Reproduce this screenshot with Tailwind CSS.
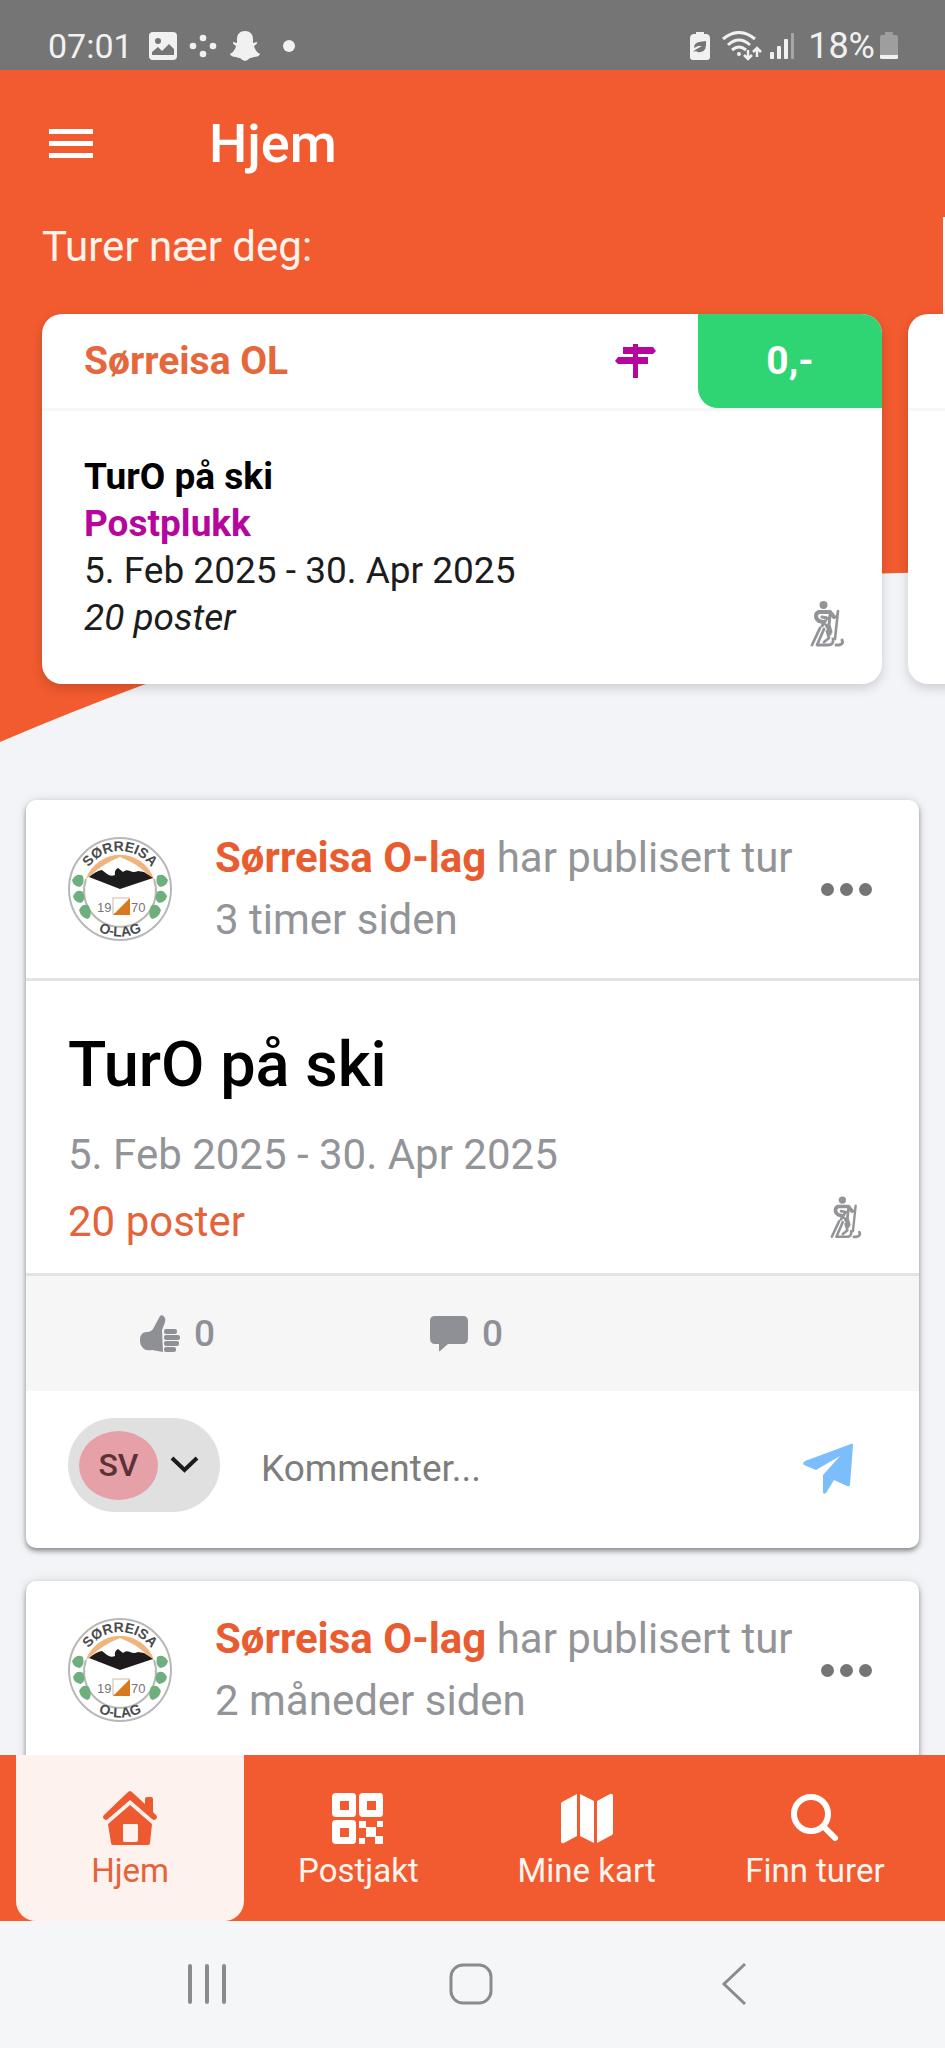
<!DOCTYPE html>
<html lang="no">
<head>
  <meta charset="UTF-8" />
  <meta name="viewport" content="width=device-width, initial-scale=1.0" />
  <title>Hjem | TurO</title>
  <script src="https://cdn.jsdelivr.net/npm/@tailwindcss/browser@4"></script>
</head>
<body class="h-screen flex flex-col overflow-hidden bg-[#f3f4f8] font-[Roboto,sans-serif] text-black">

  <!-- Shared icons -->
  <svg class="hidden" aria-hidden="true">
    <symbol id="skier" viewBox="0 0 36 46">
      <circle cx="13.500" cy="4" r="4" fill="currentColor" />
      <g fill="none" stroke="currentColor" stroke-linecap="round" stroke-linejoin="round">
        <path d="M24 16 20 11H9Q6 12 6 15Q6 18 9 20L13 21" stroke-width="4" />
        <path d="M12 16 17 17 14 22 12 25M16 24 19 29 20 33M20 14 19 24 21 31" stroke-width="3" />
        <path d="M24 16 27 16 28 10M28 10 25 38" stroke-width="2.600" />
        <path d="M10 27 2 44M14 28 7 44H18Q24 44 23 38M17 30 19 37 14 41" stroke-width="2.800" />
        <path d="M26 44H29Q34 43 32 39" stroke-width="3" />
      </g>
    </symbol>
    <symbol id="club-logo" viewBox="0 0 104 104">
      <circle cx="52" cy="52" r="51" fill="#fff" stroke="#b8b8b8" stroke-width="2" />
      <path d="M18 42A36 36 0 1 0 86 42" fill="none" stroke="#b8b8b8" stroke-width="2" />
      <path d="M18 42A36 36 0 0 1 86 42L83 41Q72 29 61 24L52 20 43 24Q30 31 21 40Z" fill="#f0b47c" />
      <path d="M21 40Q28 34 34 33L39 37Q43 40 47 38Q46 33 50 31L55 35Q58 32 62 34Q66 36 70 34L76 35 85 41 52 52Z" fill="#1d1b1c" />
      <g fill="#6fae7d">
        <path d="M4 43Q9 35 15 39Q17 47 12 50Q5 49 4 43ZM5 59Q9 51 15 55Q19 62 13 66Q6 65 5 59ZM11 73Q15 65 21 69Q25 79 20 82Q13 81 11 73Z" />
        <path d="M100 43Q95 35 89 39Q87 47 92 50Q99 49 100 43ZM99 59Q95 51 89 55Q85 62 91 66Q98 65 99 59ZM93 73Q89 65 83 69Q79 79 84 82Q91 81 93 73Z" />
      </g>
      <rect x="45" y="61" width="16" height="16" fill="#fff" stroke="#c9bba8" />
      <path d="M62 61V78H45Z" fill="#d9791f" />
      <g fill="#777" font-family="Liberation Sans, sans-serif" font-size="13">
        <text x="29" y="75">19</text>
        <text x="63" y="75">70</text>
      </g>
      <path id="logo-top" d="M14 52A38 38 0 0 1 90 52" fill="none" />
      <path id="logo-bottom" d="M4.500 52A47.500 47.500 0 0 0 99.500 52" fill="none" />
      <g fill="#4a4a4a" font-family="Liberation Sans, sans-serif" font-weight="bold" font-size="14" text-anchor="middle">
        <text><textPath href="#logo-top" startOffset="50%">SØRREISA</textPath></text>
        <text><textPath href="#logo-bottom" startOffset="50%">O-LAG</textPath></text>
      </g>
    </symbol>
  </svg>

  <!-- Status bar -->
  <div class="h-[70px] shrink-0 bg-[#757575] text-[#f1f1f1] flex items-center justify-between pl-12 pr-[46px] pt-[22px]">
    <div class="flex items-center">
      <span class="text-[34px] leading-10 mr-4">07:01</span>
      <svg class="w-[28px] h-[28px] mr-3" viewBox="0 0 28 28">
        <rect width="28" height="28" rx="4" fill="currentColor" />
        <circle cx="9" cy="9" r="3" fill="#757575" />
        <path d="M3 23V20L9 15 13 19 20 12 25 17V23Z" fill="#757575" />
      </svg>
      <svg class="w-[28px] h-[28px] mr-3" viewBox="0 0 28 28" fill="currentColor">
        <circle cx="14" cy="6" r="3.300" /><circle cx="4" cy="14" r="3.300" /><circle cx="24" cy="14" r="3.300" /><circle cx="14" cy="22" r="3.300" />
      </svg>
      <svg class="w-[32px] h-[32px] mr-[22px]" viewBox="0 0 32 32" fill="currentColor">
        <path d="M16 1C21 1 24 4 24 9V13L28 12Q29 14 25 16Q26 21 31 24Q30 27 25 27Q23 28 21 28Q18 31 16 31Q14 31 11 28Q9 28 7 27Q2 27 1 24Q6 21 7 16Q3 14 4 12L8 13V9C8 4 11 1 16 1Z" />
      </svg>
      <span class="w-3 h-3 rounded-full bg-[#f1f1f1]"></span>
    </div>
    <div class="flex items-center">
      <svg class="w-[20px] h-[30px] mr-3" viewBox="0 0 20 30">
        <path d="M6 1H14V3H17Q20 4 20 7V26Q20 29 17 29H3Q0 29 0 26V7Q0 4 3 3H6Z" fill="currentColor" />
        <path d="M3 21 5 19 12 15 8 15 4 17Q4 12 9 11L16 10Q17 20 11 21Q8 22 6 20Z" fill="#757575" />
      </svg>
      <svg class="w-[40px] h-[30px] mr-2" viewBox="0 0 40 30" fill="none" stroke="currentColor" stroke-width="3">
        <path d="M1 8Q17 -5 33 8M6 14Q17 4 28 14M10 19Q17 13 24 19" />
        <circle cx="17" cy="23" r="2" fill="currentColor" stroke="none" />
        <path d="M26 19V27M22 24 26 28 30 24M35 26V18M31 21 35 17 39 21" stroke-width="2.500" />
      </svg>
      <svg class="w-[24px] h-[28px] mr-[14px]" viewBox="0 0 24 28" fill="currentColor">
        <rect x="0" y="20" width="4" height="7" rx="1" /><rect x="7" y="14" width="4" height="13" rx="1" /><rect x="14" y="7" width="4" height="20" rx="1" /><rect x="21" y="1" width="3" height="26" rx="1" opacity=".4" />
      </svg>
      <span class="text-[36px] leading-10 mr-1">18%</span>
      <svg class="w-[20px] h-[30px]" viewBox="0 0 20 30">
        <path d="M6 1H14V4H17Q19 4 19 7V24H1V7Q1 4 3 4H6Z" fill="#9e9e9e" />
        <path d="M1 24H19V27Q19 28 17 28H3Q1 28 1 27Z" fill="currentColor" />
      </svg>
    </div>
  </div>

  <main class="relative flex-1 min-h-0 overflow-hidden">
    <!-- Orange backdrop -->
    <svg class="absolute inset-x-0 top-0 w-full h-[672px] -z-10" viewBox="0 0 945 672" preserveAspectRatio="none">
      <path d="M0 0H945V502Q450 510 143 615Q70 642 0 672Z" fill="#f25b2f" />
    </svg>

    <!-- Top bar -->
    <header class="h-[147px] flex items-center text-white">
      <button class="ml-12 w-[45px]" aria-label="Meny">
        <svg class="w-full h-[30px]" viewBox="0 0 45 30" fill="currentColor">
          <rect x="1" y="0" width="44" height="5" /><rect x="1" y="12" width="44" height="5" /><rect x="1" y="24" width="44" height="5" />
        </svg>
      </button>
      <h1 class="ml-[116px] text-[54px] leading-[60px] font-medium">Hjem</h1>
    </header>

    <!-- Nearby tours -->
    <div class="h-[97px] pl-[42px] pt-1.5 border-r-2 border-white">
      <h2 class="text-[42px] leading-[48px] text-[#fff3ec]">Turer nær deg:</h2>
    </div>
    <div class="flex gap-[26px] pl-[42px]">
      <article class="shrink-0 w-[calc(100vw-105px)] rounded-[20px] bg-white shadow-[0_4px_12px_rgba(0,0,0,0.16)] overflow-hidden">
        <div class="h-[97px] border-b-3 border-[#f7f7f8] flex items-start">
          <h3 class="flex-1 pl-[42px] text-[39px] leading-[94px] font-bold text-[#e4683c]">Sørreisa OL</h3>
          <svg class="w-[41px] h-[34px] mt-[30px] mr-[42px] text-[#b5079d]" viewBox="0 0 41 34" fill="currentColor">
            <path d="M18 0H23V3H38L41 7 38 10H23V13H33V20H23V34H18V20H3L0 17 3 13H18V10H8V3H18Z" />
          </svg>
          <span class="w-[184px] h-[94px] rounded-bl-[20px] bg-[#2fd572] text-white text-[39px] leading-[94px] font-bold text-center">0,-</span>
        </div>
        <div class="flex items-end justify-between pl-[42px] pr-9 pt-[42px] pb-[43px] text-[37px] leading-[47px]">
          <div>
            <p class="font-bold">TurO på ski</p>
            <p class="font-bold text-[#b5079d]">Postplukk</p>
            <p class="text-[#1c1c1c]">5. Feb 2025 - 30. Apr 2025</p>
            <p class="italic text-[#1c1c1c]">20 poster</p>
          </div>
          <svg class="w-[36px] h-[46px] -mb-1.5 text-[#939498]"><use href="#skier" /></svg>
        </div>
      </article>
      <article class="shrink-0 w-[calc(100vw-105px)] rounded-[20px] bg-white shadow-[0_4px_12px_rgba(0,0,0,0.16)]">
        <div class="h-[97px] border-b-3 border-[#f7f7f8]"></div>
      </article>
    </div>

    <!-- Feed -->
    <section class="mt-[116px] px-[26px] flex flex-col gap-[33px]">
      <article class="rounded-[10px] bg-white shadow-[0_3px_5px_rgba(0,0,0,0.4),0_0_12px_rgba(0,0,0,0.1)] overflow-hidden">
        <div class="h-[178px] flex items-center pl-[42px] pr-[47px]">
          <svg class="w-[104px] h-[104px] mr-[43px]"><use href="#club-logo" /></svg>
          <div class="flex-1 text-[42px] leading-[62px] text-[#939498] whitespace-nowrap">
            <p><a href="#" class="font-bold text-[#e95c30]">Sørreisa O-lag</a> har publisert tur</p>
            <p>3 timer siden</p>
          </div>
          <button class="flex gap-[6px]" aria-label="Mer">
            <span class="size-[13px] rounded-full bg-[#757575]"></span>
            <span class="size-[13px] rounded-full bg-[#757575]"></span>
            <span class="size-[13px] rounded-full bg-[#757575]"></span>
          </button>
        </div>
        <div class="border-y-3 border-[#e3e3e3] pl-[42px] pr-[56px] pt-[46px] pb-[18px]">
          <h2 class="text-[63px] leading-[76px] font-medium mb-[18px]">TurO på ski</h2>
          <p class="text-[42px] leading-[67px] text-[#939498]">5. Feb 2025 - 30. Apr 2025</p>
          <div class="flex items-center justify-between text-[42px] leading-[67px]">
            <a href="#" class="text-[#e4633a]">20 poster</a>
            <svg class="w-[33px] h-[43px] mb-2 text-[#939498]"><use href="#skier" /></svg>
          </div>
        </div>
        <div class="h-[115px] bg-[#f6f6f6] flex items-center text-[37px] leading-[44px] font-medium text-[#8f9096]">
          <button class="w-[290px] pl-[114px] flex items-center gap-[14px]" aria-label="Lik">
            <svg class="w-[40px] h-[38px]" viewBox="0 0 40 38" fill="currentColor">
              <path d="M20 1Q23 -1 25 3Q26 6 24 10L22 15 23 37 12 35Q7 36 4 34Q0 31 0 25Q0 17 7 17Q11 17 13 14Z" />
              <rect x="24" y="14" width="13" height="5" rx="2" /><rect x="24" y="20" width="16" height="5" rx="2" /><rect x="24" y="26" width="15" height="5" rx="2" /><rect x="24" y="32" width="12" height="5" rx="2" />
            </svg>
            <span>0</span>
          </button>
          <button class="pl-[114px] flex items-center gap-[14px]" aria-label="Kommentarer">
            <svg class="w-[38px] h-[36px]" viewBox="0 0 38 36" fill="currentColor">
              <path d="M5 0H33Q38 0 38 5V22Q38 28 33 28H18L10 35Q9 36 9 34V28H5Q0 28 0 22V5Q0 0 5 0Z" />
            </svg>
            <span>0</span>
          </button>
        </div>
        <form class="flex items-center pl-[42px] pr-[66px] pt-[27px] pb-9">
          <button type="button" class="w-[152px] h-[94px] shrink-0 rounded-full bg-[#e0e0e0] flex items-center pl-[11px] gap-[12px]" aria-label="Velg bruker">
            <span class="w-[79px] h-[69px] rounded-[50%] bg-[#e6a0a7] text-[#5c3238] text-[32px] leading-[69px] font-medium text-center">SV</span>
            <svg class="w-[29px] h-[18px]" viewBox="0 0 29 18" fill="none" stroke="#1c1c1c" stroke-width="4"><path d="M2 2 14.500 14 27 2" /></svg>
          </button>
          <input type="text" placeholder="Kommenter..." aria-label="Kommenter" class="flex-1 min-w-0 ml-[41px] mt-2 text-[37px] leading-[44px] outline-none placeholder:text-[#7d7d7d]">
          <button type="submit" class="mt-2" aria-label="Send">
            <svg class="w-[50px] h-[52px]" viewBox="0 0 50 52" fill="#7cbefb">
              <path d="M48 1Q50 0 50 2L47 42Q47 44 44 43L31 37 23 50Q20 52 20 49V32L37 13 13 27 1 22Q-1 20 2 18Z" />
            </svg>
          </button>
        </form>
      </article>

      <article class="rounded-[10px] bg-white shadow-[0_3px_5px_rgba(0,0,0,0.4),0_0_12px_rgba(0,0,0,0.1)]">
        <div class="h-[198px] flex items-start pl-[42px] pr-[47px] pt-[27px]">
          <svg class="w-[104px] h-[104px] mt-[10px] mr-[43px]"><use href="#club-logo" /></svg>
          <div class="flex-1 text-[42px] leading-[62px] text-[#939498] whitespace-nowrap">
            <p><a href="#" class="font-bold text-[#e95c30]">Sørreisa O-lag</a> har publisert tur</p>
            <p>2 måneder siden</p>
          </div>
          <button class="flex items-center gap-[6px] h-[124px]" aria-label="Mer">
            <span class="size-[13px] rounded-full bg-[#757575]"></span>
            <span class="size-[13px] rounded-full bg-[#757575]"></span>
            <span class="size-[13px] rounded-full bg-[#757575]"></span>
          </button>
        </div>
      </article>
    </section>
  </main>

  <!-- Tab bar -->
  <nav class="relative h-[166px] shrink-0 bg-[#f25b2f] grid grid-cols-4 px-4 text-[33px] leading-[38px] text-[#fff6f0]">
    <a href="#" class="bg-[#fdf2ee] text-[#e4633a] rounded-b-[20px] flex flex-col items-center gap-[7px] pt-9">
      <svg class="w-[54px] h-[54px]" viewBox="0 0 54 54" fill="#ee5a2f">
        <path d="M27 0Q28 0 30 2L42 13V8Q42 6 44 6H48Q50 6 50 8V21L53 24Q55 26 53 28Q51 30 49 28L27 9 5 28Q3 30 1 28Q-1 26 1 24L24 2Q26 0 27 0Z" />
        <path d="M27 14 49 33 47 52Q47 54 45 54H10Q8 54 8 52L5 33ZM21 33Q20 33 20 34V49Q20 51 21 51H33Q35 51 35 49V34Q35 33 33 33Z" fill-rule="evenodd" />
      </svg>
      Hjem
    </a>
    <a href="#" class="flex flex-col items-center gap-[7px] pt-9">
      <svg class="w-[54px] h-[54px]" viewBox="-1 -2 54 54" fill="#fff">
        <path d="M4 0H21Q24 0 24 4V20Q24 24 21 24H4Q0 24 0 20V4Q0 0 4 0ZM8 8V17H17V8ZM31 0H48Q51 0 51 4V20Q51 24 48 24H31Q27 24 27 20V4Q27 0 31 0ZM35 8V17H44V8ZM4 27H21Q24 27 24 31V47Q24 51 21 51H4Q0 51 0 47V31Q0 27 4 27ZM8 35V44H17V35Z" fill-rule="evenodd" />
        <path d="M27 28H34V34H44V43H51V51H43V44H34V35H27ZM45 28H51V34H45ZM27 45H33V51H27Z" />
      </svg>
      Postjakt
    </a>
    <a href="#" class="flex flex-col items-center gap-[7px] pt-9">
      <svg class="w-[54px] h-[54px]" viewBox="-1 -2 54 54" fill="#fff">
        <path d="M1 9 16 1V43L3 50Q0 51 0 48V11Q0 10 1 9ZM19 1 33 8V50L19 43ZM36 8 49 1Q52 0 52 3V40Q52 41 51 42L36 50Z" />
      </svg>
      Mine kart
    </a>
    <a href="#" class="flex flex-col items-center gap-[7px] pt-9">
      <svg class="w-[54px] h-[54px]" viewBox="-3 -3 54 54" fill="none" stroke="#fff" stroke-width="6" stroke-linecap="round">
        <circle cx="20" cy="20" r="17" /><path d="M33 33 44 44" />
      </svg>
      Finn turer
    </a>
  </nav>

  <!-- System navigation -->
  <div class="h-[127px] shrink-0 bg-[#f5f6f8] flex justify-center pr-1 pb-0.5 text-[#8a8b8d]">
    <button class="w-[28%] flex items-center justify-center" aria-label="Siste apper">
      <svg class="w-[40px] h-[42px]" viewBox="0 0 40 42" stroke="currentColor" stroke-width="4" stroke-linecap="round"><path d="M3 3V39M20 3V39M37 3V39" /></svg>
    </button>
    <button class="w-[28%] flex items-center justify-center" aria-label="Hjem">
      <svg class="w-[44px] h-[42px]" viewBox="0 0 44 42" fill="none" stroke="currentColor" stroke-width="3"><rect x="2" y="2" width="40" height="38" rx="12" /></svg>
    </button>
    <button class="w-[28%] flex items-center justify-center" aria-label="Tilbake">
      <svg class="w-[26px] h-[44px]" viewBox="0 0 26 44" fill="none" stroke="currentColor" stroke-width="3"><path d="M24 2 3 22 24 42" /></svg>
    </button>
  </div>
</body>
</html>
